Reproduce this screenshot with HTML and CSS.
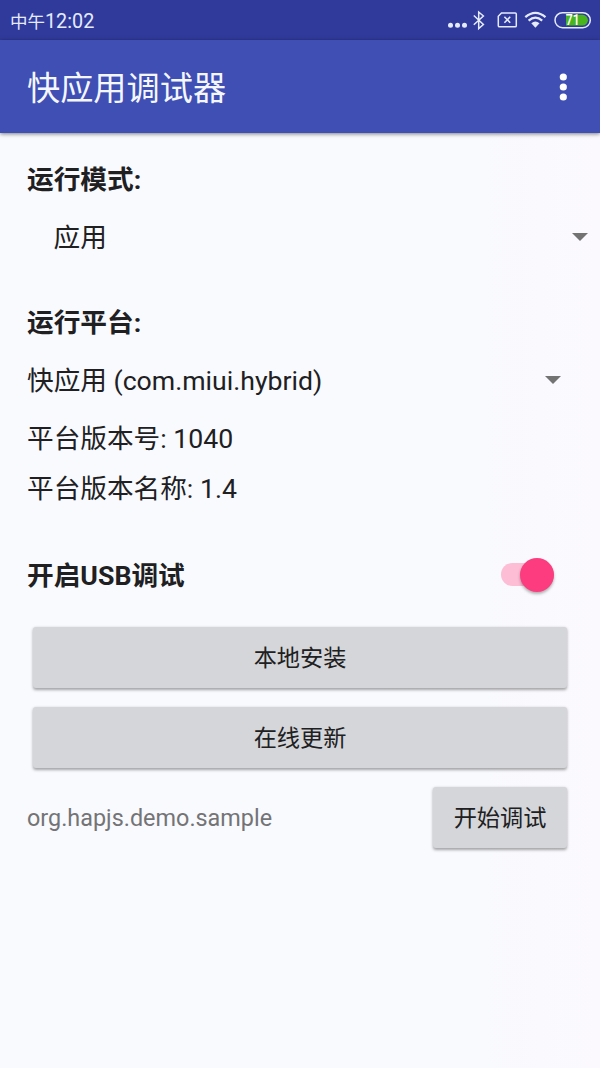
FILE: index.html
```html
<!DOCTYPE html>
<html lang="zh-CN">
<head>
<meta charset="utf-8">
<title>快应用调试器</title>
<link rel="stylesheet" href="styles.css">
</head>
<body>
<div class="screen">
  <div class="status">
    <div class="time"><span class="period">中午</span><span>12:02</span></div>
    <svg class="status-icons" width="160" height="40" viewBox="0 0 160 40" fill="none" stroke="#e4ebff" stroke-width="1.5">
      <g fill="#e4ebff" stroke="none"><circle cx="10.5" cy="25.3" r="2.5"/><circle cx="17.5" cy="25.3" r="2.5"/><circle cx="24.5" cy="25.3" r="2.5"/></g>
      <path d="M33.8 15.5 43.4 24.5 38.7 28.6V12L43.4 16 33.8 24.7"/>
      <path d="M61.5 13H75.2Q76.3 13 76.3 14V25.7Q76.3 26.8 75.2 26.8H59.5Q58.3 26.8 58.3 25.7V16.3Z"/>
      <path d="M64.4 16.8 70.2 22.8M70.2 16.8 64.4 22.8" stroke-width="1.6"/>
      <g stroke-width="2.2"><path d="M85.3 17.1Q95.4 8.5 105.5 17.1"/><path d="M88.6 20.6Q95.4 14.8 102.2 20.6"/></g>
      <path d="M91.3 23.2Q95.4 19.8 99.5 23.2L95.4 27.8Z" fill="#e4ebff" stroke="none"/>
      <rect x="115" y="12.7" width="35.3" height="15" rx="7.5"/>
      <path d="M126 14.8H142.5A5.4 5.4 0 0 1 142.5 25.6H126Z" fill="#49b51d" stroke="none"/>
      <text class="battery-level" x="132.7" y="25.2" text-anchor="middle" textLength="14" lengthAdjust="spacingAndGlyphs">71</text>
    </svg>
  </div>
  <header class="appbar">
    <h1 class="title">快应用调试器</h1>
    <svg class="more" width="8" height="28" viewBox="0 0 8 28" fill="#fff"><circle cx="4.3" cy="4" r="3.6"/><circle cx="4.3" cy="14" r="3.6"/><circle cx="4.3" cy="24" r="3.6"/></svg>
  </header>
  <main class="content">
    <h2 class="label">运行模式:</h2>
    <div class="select select-mode"><span>应用</span><i class="caret"></i></div>
    <h2 class="label label-platform">运行平台:</h2>
    <div class="select"><span>快应用 (com.miui.hybrid)</span><i class="caret"></i></div>
    <p class="info">平台版本号: 1040</p>
    <p class="info">平台版本名称: 1.4</p>
    <div class="usb">
      <h2 class="label">开启USB调试</h2>
      <div class="switch"><div class="thumb"></div></div>
    </div>
    <div class="actions">
      <button class="button">本地安装</button>
      <button class="button">在线更新</button>
      <div class="debug"><span class="package">org.hapjs.demo.sample</span><button class="button start">开始调试</button></div>
    </div>
  </main>
</div>
</body>
</html>
```
FILE: styles.css
```css
* { box-sizing: border-box; }
body {
  margin: 0;
  background: #f9fafe;
  color: #202022;
  font: 26.65px/40px Roboto, "Noto Sans CJK SC", sans-serif;
}
h1, h2, p { margin: 0; font-weight: 400; }
.screen {
  height: 1068px;
  display: flex;
  flex-direction: column;
  background: linear-gradient(90deg, #f8fafe 0%, #f9fafe 80%, #fbf9fd 100%);
}
.status {
  height: 40px;
  display: flex;
  justify-content: space-between;
  align-items: center;
  padding-left: 10px;
  background: #303a9b;
  color: #e4ebff;
}
.time { display: flex; align-items: baseline; padding-top: 3px; font-size: 19.8px; }
.period { font-size: 17.5px; }
.battery-level { fill: #fff; stroke: none; font: 500 14.5px Roboto, sans-serif; }
.appbar {
  height: 93px;
  display: flex;
  justify-content: space-between;
  align-items: center;
  padding: 0 33px 0 27px;
  background: #3f4fb3;
  box-shadow: 0 1px 4px rgba(0, 0, 0, .5);
}
.title { padding-top: 4px; font-size: 33.2px; color: #f4f7ff; }
.content { padding: 27px 27px 0; display: flex; flex-direction: column; }
.label { font-size: 26.7px; font-weight: 700; height: 40px; }
.label-platform { margin-top: 45px; }
.select {
  height: 40px;
  margin-top: 18px;
  padding-right: 12px;
  display: flex;
  align-items: center;
  justify-content: space-between;
}
.select-mode { padding-left: 26.5px; margin-right: -27px; }
.caret {
  margin-bottom: 2px;
  border: 8px solid transparent;
  border-top-color: #737373;
  border-bottom: 0;
}
.info { height: 40px; margin-top: 18px; }
.info + .info { margin-top: 10px; }
.usb {
  margin-top: 47px;
  height: 40px;
  display: flex;
  align-items: center;
  justify-content: space-between;
}
.switch {
  width: 53px;
  height: 23px;
  margin-right: 19px;
  margin-bottom: 3px;
  display: flex;
  align-items: center;
  justify-content: flex-end;
  border-radius: 12px;
  background: #fcbdd5;
}
.thumb {
  width: 34px;
  height: 34px;
  flex: none;
  border-radius: 50%;
  background: #fc3c7e;
  box-shadow: 0 2px 3px rgba(0, 0, 0, .3);
}
.actions { display: flex; flex-direction: column; gap: 19px; padding: 31px 6px 0; }
.button {
  height: 61px;
  padding: 0;
  border: 0;
  border-radius: 3px;
  background: #d5d6d9;
  box-shadow: 0 1.5px 3px rgba(0, 0, 0, .35);
  color: #202022;
  font: 23.2px/40px Roboto, "Noto Sans CJK SC", sans-serif;
}
.debug { display: flex; align-items: center; justify-content: space-between; margin-left: -6px; }
.package { font-size: 23.4px; color: #747476; }
.start { width: 134px; }
```
